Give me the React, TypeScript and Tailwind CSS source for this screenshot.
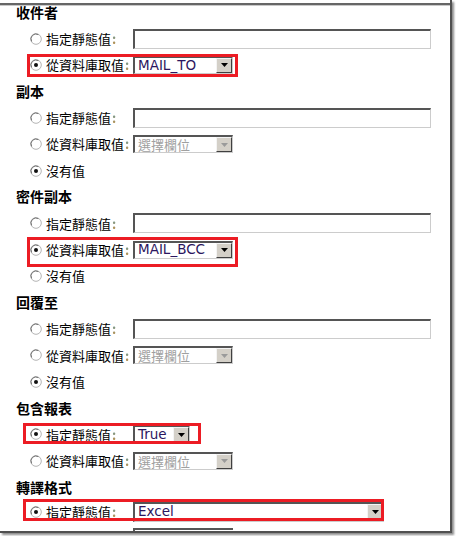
import React from "react";

const CJK = "font-['Noto_Sans_CJK_TC','Noto_Sans_CJK_SC',sans-serif]";
const LAT = "font-['DejaVu_Sans','Noto_Sans_CJK_TC',sans-serif]";

function Radio({ checked }: { checked?: boolean }) {
  return (
    <svg width="12" height="12" viewBox="0 0 12 12" className="shrink-0">
      <circle cx="6" cy="6" r="5.3" fill="#ffffff" stroke="#b4b4b4" strokeWidth="1" />
      <path d="M1.6 8.4 A5 5 0 0 1 8.4 1.6" fill="none" stroke="#707070" strokeWidth="1" />
      {checked && <circle cx="6" cy="6" r="2" fill="#111111" />}
    </svg>
  );
}

function Colon() {
  return (
    <span className="ml-[1px] text-[13px] font-bold bg-linear-to-b from-[#1a9ab0] to-[#d08a20] bg-clip-text text-transparent">
      :
    </span>
  );
}

function DropBtn({ disabled }: { disabled?: boolean }) {
  return (
    <div className="w-[16px] h-full shrink-0 bg-[#d4d0c8] border-t border-l border-t-[#f4f4f4] border-l-[#f4f4f4] border-r border-b border-r-[#404040] border-b-[#404040] flex items-center justify-center">
      <svg width="7" height="4" viewBox="0 0 7 4">
        <path d="M0 0h7L3.5 4z" fill={disabled ? "#9a9a9a" : "#000000"} />
      </svg>
    </div>
  );
}

function Select({
  wClass,
  hClass = "h-[18px]",
  value,
  disabled,
}: {
  wClass: string;
  hClass?: string;
  value: string;
  disabled?: boolean;
}) {
  return (
    <div
      className={`${wClass} ${hClass} shrink-0 flex items-stretch bg-white border-t-2 border-l-2 border-t-[#555555] border-l-[#555555] border-r border-b border-r-[#cccccc] border-b-[#cccccc]`}
    >
      <div
        className={`flex-1 flex items-center pl-[3px] whitespace-nowrap leading-none ${
          disabled ? `${CJK} text-[13px] text-[#a0a0a0]` : `${LAT} text-[13.5px] text-[#2b1660]`
        }`}
      >
        {value}
      </div>
      <DropBtn disabled={disabled} />
    </div>
  );
}

function Input() {
  return (
    <div className="w-[298px] h-[20px] shrink-0 bg-white border-t-2 border-l-2 border-t-[#555555] border-l-[#555555] border-r border-b border-r-[#cccccc] border-b-[#cccccc]" />
  );
}

function Heading({ children }: { children: React.ReactNode }) {
  return (
    <div className={`h-[26.4px] flex items-center pl-[16px] ${CJK} text-[14px] font-bold text-black`}>
      {children}
    </div>
  );
}

function Option({
  label,
  checked,
  colon = true,
  rowClass = "",
  children,
}: {
  label: string;
  checked?: boolean;
  colon?: boolean;
  rowClass?: string;
  children?: React.ReactNode;
}) {
  return (
    <div className={`h-[26.4px] flex items-center ${rowClass}`}>
      <div className={`w-[133px] shrink-0 pl-[30px] flex items-center ${CJK} text-[13px] text-black`}>
        <Radio checked={checked} />
        <span className="ml-[4px] whitespace-nowrap">{label}</span>
        {colon && <Colon />}
      </div>
      {children}
    </div>
  );
}

export default function App() {
  return (
    <div className="w-[456px] h-[536px] bg-white relative overflow-hidden">
      <div className="w-[452px] h-[533px] relative overflow-hidden bg-white border-r-2 border-b-2 border-[#505050] shadow-[2px_2px_2px_rgba(0,0,0,0.45)]">
        <div className="absolute left-0 top-[3px] w-full h-[2px] bg-[#666666]" />
        <div className="absolute left-0 top-[5px] w-full h-[1px] bg-[#c8c8c8]" />
        <div className="flex flex-col -mt-[1px]">
          <Heading>收件者</Heading>
          <Option label="指定靜態值">
            <Input />
          </Option>
          <Option label="從資料庫取值" checked>
            <Select wClass="w-[100px]" value="MAIL_TO" />
          </Option>

          <Heading>副本</Heading>
          <Option label="指定靜態值">
            <Input />
          </Option>
          <Option label="從資料庫取值">
            <Select wClass="w-[100px]" value="選擇欄位" disabled />
          </Option>
          <Option label="沒有值" checked colon={false} />

          <Heading>密件副本</Heading>
          <Option label="指定靜態值">
            <Input />
          </Option>
          <Option label="從資料庫取值" checked>
            <Select wClass="w-[100px]" value="MAIL_BCC" />
          </Option>
          <Option label="沒有值" colon={false} />

          <Heading>回覆至</Heading>
          <Option label="指定靜態值">
            <Input />
          </Option>
          <Option label="從資料庫取值">
            <Select wClass="w-[100px]" value="選擇欄位" disabled />
          </Option>
          <Option label="沒有值" checked colon={false} />

          <Heading>包含報表</Heading>
          <Option label="指定靜態值" checked>
            <Select wClass="w-[57px]" value="True" />
          </Option>
          <Option label="從資料庫取值">
            <Select wClass="w-[100px]" value="選擇欄位" disabled />
          </Option>

          <Heading>轉譯格式</Heading>
          <Option label="指定靜態值" checked rowClass="-mt-[2px]">
            <Select wClass="w-[251px]" hClass="h-[20px]" value="Excel" />
          </Option>
          <div className="h-[26.4px] flex items-center pl-[133px]">
            <div className="w-[100px] h-[20px] bg-white border-t-2 border-l-2 border-t-[#555555] border-l-[#555555]" />
          </div>
        </div>

        {/* red annotation boxes drawn over the screenshot */}
        <div className="absolute left-[27px] top-[54px] w-[211px] h-[23px] border-[3px] border-[#ec1c24] pointer-events-none" />
        <div className="absolute left-[27px] top-[237px] w-[211px] h-[30px] border-[3px] border-[#ec1c24] pointer-events-none" />
        <div className="absolute left-[23px] top-[423px] w-[178px] h-[21px] border-[3px] border-[#ec1c24] pointer-events-none" />
        <div className="absolute left-[23px] top-[499px] w-[361px] h-[22px] border-[3px] border-[#ec1c24] pointer-events-none" />
      </div>
    </div>
  );
}
